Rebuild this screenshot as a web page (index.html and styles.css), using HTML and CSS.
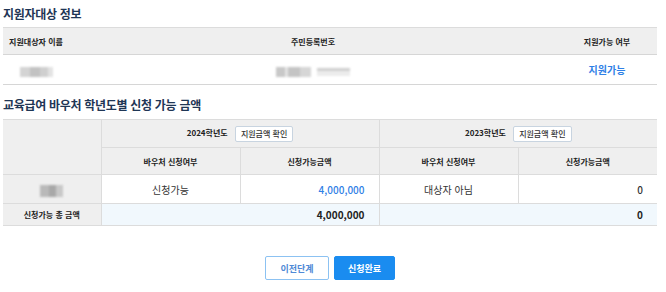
FILE: index.html
```html
<!DOCTYPE html>
<html lang="ko">
<head>
  <meta charset="UTF-8">
  <meta name="viewport" content="width=device-width, initial-scale=1.0">
  <title>교육급여 바우처 신청</title>
  <link rel="stylesheet" href="styles.css">
</head>
<body>
  <div class="wrap">
    <h2 class="section-title">지원자대상 정보</h2>
    <table class="info-table">
      <colgroup>
        <col class="col-name">
        <col>
        <col class="col-status">
      </colgroup>
      <thead>
        <tr>
          <th>지원대상자 이름</th>
          <th>주민등록번호</th>
          <th>지원가능 여부</th>
        </tr>
      </thead>
      <tbody>
        <tr>
          <td><span class="masked masked-name"></span></td>
          <td>
            <span class="masked masked-rrn-a"></span>
            <span class="masked masked-rrn-b"></span>
          </td>
          <td class="status-ok">지원가능</td>
        </tr>
      </tbody>
    </table>

    <h2 class="section-title second">교육급여 바우처 학년도별 신청 가능 금액</h2>
    <table class="amount-table">
      <colgroup>
        <col class="col-label">
        <col class="col-sub">
        <col class="col-sub">
        <col class="col-sub">
        <col class="col-sub">
      </colgroup>
      <thead>
        <tr class="year-row">
          <th rowspan="2" class="label-cell"></th>
          <th colspan="2">2024학년도 <button class="check-btn">지원금액 확인</button></th>
          <th colspan="2">2023학년도 <button class="check-btn">지원금액 확인</button></th>
        </tr>
        <tr class="sub-row">
          <th>바우처 신청여부</th>
          <th>신청가능금액</th>
          <th>바우처 신청여부</th>
          <th>신청가능금액</th>
        </tr>
      </thead>
      <tbody>
        <tr class="data-row">
          <td class="label-cell"><span class="masked masked-child"></span></td>
          <td>신청가능</td>
          <td class="amount highlight">4,000,000</td>
          <td>대상자 아님</td>
          <td class="amount">0</td>
        </tr>
        <tr class="total-row">
          <td class="label-cell total-label">신청가능 총 금액</td>
          <td colspan="2" class="amount">4,000,000</td>
          <td colspan="2" class="amount">0</td>
        </tr>
      </tbody>
    </table>

    <div class="actions">
      <button class="btn btn-outline">이전단계</button>
      <button class="btn btn-primary">신청완료</button>
    </div>
  </div>
</body>
</html>
```

FILE: styles.css
```css
body {
  margin: 0;
  font-family: "Noto Sans CJK KR", "Noto Sans", sans-serif;
  color: #333;
  background: #fff;
}
.wrap {
  width: 654px;
  margin-left: 3px;
  padding-top: 6px;
}
.section-title {
  margin: 0 0 5px;
  font-size: 12px;
  line-height: 16px;
  font-weight: 700;
  color: #1f3655;
  letter-spacing: -0.3px;
}
.section-title.second {
  margin-top: 12px;
  margin-bottom: 6px;
}
table {
  width: 100%;
  border-collapse: collapse;
  table-layout: fixed;
}
th, td {
  padding: 0;
  text-align: center;
}
th {
  font-size: 8px;
  font-weight: 700;
  color: #222;
  background-color: #efefef;
}

/* 지원자대상 정보 */
.info-table {
  border-top: 1px solid #dcdcdc;
}
.info-table .col-name {
  width: 66px;
}
.info-table .col-status {
  width: 100px;
}
.info-table th {
  height: 26px;
  border-bottom: 1px solid #d6d6d6;
}
.info-table td {
  height: 29px;
  border-bottom: 1px solid #d6d6d6;
}
.status-ok {
  font-size: 10px;
  font-weight: 700;
  color: #2f80e6;
}
.masked {
  display: inline-block;
  height: 10px;
  vertical-align: middle;
  filter: blur(1.2px);
}
.masked-name {
  width: 33px;
  background: linear-gradient(90deg, #d4d4d4 0 30%, #c2c2c2 30% 60%, #cfcfcf 60% 85%, #e3e3e3 85%);
}
.masked-rrn-a {
  width: 35px;
  background: linear-gradient(90deg, #c8c8c8 0 25%, #e4e4e4 25% 35%, #c4c4c4 35% 70%, #d6d6d6 70%);
}
.masked-rrn-b {
  width: 33px;
  height: 8px;
  margin-left: 2px;
  background: linear-gradient(180deg, #d0d0d0 0 40%, #ececec 40%);
}
.masked-child {
  width: 23px;
  height: 12px;
  background: linear-gradient(90deg, #b9b9b9 0 40%, #a8a8a8 40% 70%, #c8c8c8 70%);
}

/* 학년도별 신청 가능 금액 */
.amount-table {
  border-top: 1px solid #dcdcdc;
  border-bottom: 1px solid #dcdcdc;
}
.amount-table .col-label {
  width: 98px;
}
.amount-table th,
.amount-table td {
  border: 1px solid #dcdcdc;
}
.amount-table tr > :first-child {
  border-left: none;
}
.amount-table tr > :last-child {
  border-right: none;
}
.year-row th {
  height: 27px;
}
.sub-row th {
  height: 26px;
}
.label-cell {
  background-color: #efefef;
}
.check-btn {
  height: 16px;
  margin-left: 5px;
  padding: 0 5px;
  font-family: inherit;
  font-size: 8px;
  font-weight: 500;
  color: #333;
  background: #fff;
  border: 1px solid #c8d4e0;
  border-radius: 2px;
  vertical-align: middle;
}
.data-row td {
  height: 28px;
  font-size: 10px;
  color: #333;
}
.amount {
  text-align: right;
  padding-right: 14px;
  font-size: 10px;
  font-weight: 500;
}
.amount.highlight {
  color: #2f80e6;
}
.total-row td {
  height: 21px;
  background-color: #f1f8fd;
  font-weight: 700;
  color: #222;
}
.total-row td.total-label {
  background-color: #efefef;
  font-size: 8px;
  text-align: center;
}

.actions {
  display: flex;
  justify-content: center;
  gap: 5px;
  margin-top: 30px;
}
.btn {
  height: 24px;
  padding: 0;
  font-family: inherit;
  font-size: 9px;
  font-weight: 700;
  white-space: nowrap;
  border-radius: 2px;
  cursor: pointer;
}
.btn-outline {
  width: 64px;
  color: #4f8ad6;
  background: #fff;
  border: 1px solid #8cc2f2;
}
.btn-primary {
  width: 61px;
  color: #fff;
  background: #1a8cf0;
  border: 1px solid #1a8cf0;
}
```
